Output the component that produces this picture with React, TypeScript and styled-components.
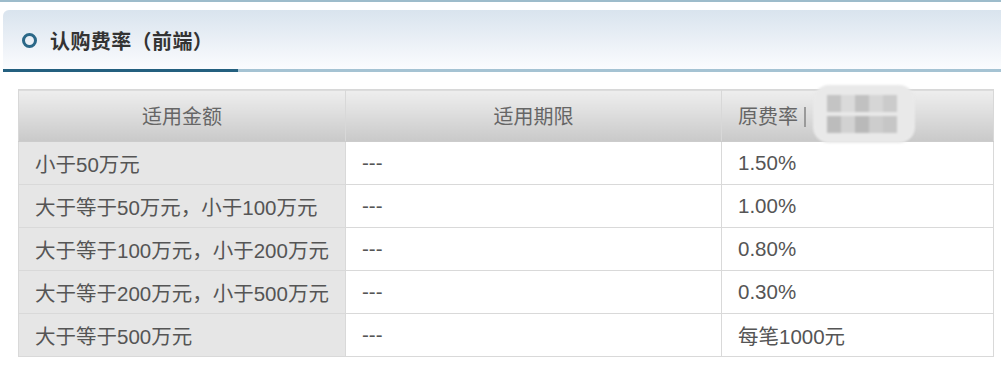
import React from 'react';
import styled, { createGlobalStyle } from 'styled-components';

const GlobalStyle = createGlobalStyle`
  html, body {
    margin: 0;
    padding: 0;
    background: #ffffff;
  }
  body {
    font-family: 'Liberation Sans', 'Noto Sans CJK SC', sans-serif;
  }
`;

type FeeRow = {
  amount: string;
  period: string;
  rate: string;
};

const rows: FeeRow[] = [
  { amount: '小于50万元', period: '---', rate: '1.50%' },
  { amount: '大于等于50万元，小于100万元', period: '---', rate: '1.00%' },
  { amount: '大于等于100万元，小于200万元', period: '---', rate: '0.80%' },
  { amount: '大于等于200万元，小于500万元', period: '---', rate: '0.30%' },
  { amount: '大于等于500万元', period: '---', rate: '每笔1000元' },
];

const Page = styled.div`
  border-top: 2px solid #9dbccb;
  width: 1001px;
  height: 363px;
  overflow: hidden;
`;

const Section = styled.div`
  margin: 8px 0 0 3px;
`;

const TitleBar = styled.div`
  height: 59px;
  display: flex;
  align-items: center;
  gap: 13px;
  padding: 1px 0 0 19px;
  box-sizing: border-box;
  border-top-left-radius: 6px;
  background: linear-gradient(to bottom, #d9e4ee 0%, #e8eef5 45%, #fbfcfe 100%);
`;

const Ring = styled.span`
  width: 9px;
  height: 9px;
  border: 3px solid #2b6888;
  border-radius: 50%;
  flex: none;
`;

const Title = styled.h2`
  margin: 0;
  font-family: 'Noto Sans CJK SC', sans-serif;
  font-size: 20px;
  font-weight: 700;
  color: #333333;
  letter-spacing: 0.4px;
`;

const TitleRule = styled.div`
  height: 3px;
  background: linear-gradient(to right, #24607f 235px, #a5c3d3 235px);
`;

const Table = styled.table`
  margin: 17px 0 0 18px;
  width: 975px;
  border-collapse: collapse;
  table-layout: fixed;
  font-size: 20.5px;
  color: #555555;
`;

const HeadCell = styled.th<{ $align?: 'left' | 'center' }>`
  position: relative;
  height: 52px;
  padding: 0 16px;
  box-sizing: border-box;
  font-size: 20px;
  font-weight: 400;
  color: #666666;
  text-align: ${(p) => p.$align ?? 'center'};
  background: linear-gradient(to bottom, #eeeeee 0%, #dcdcdc 50%, #c9c9c9 100%);
  border: 1px solid #d8d8d8;
  border-bottom-color: #cccccc;
`;

const Bar = styled.span`
  display: inline-block;
  width: 2px;
  height: 20px;
  margin-left: 6px;
  vertical-align: -3px;
  background: #9a9a9a;
`;

const Mosaic = styled.div`
  position: absolute;
  left: 91px;
  top: -5px;
  width: 102px;
  height: 58px;
  border-radius: 16px;
  background: #e9e9e9;
  filter: blur(1px);
  display: grid;
  grid-template-columns: repeat(5, 14px);
  grid-template-rows: 17px 17px;
  row-gap: 4px;
  padding: 10px 0 0 14px;
  box-sizing: border-box;
`;

const Pixel = styled.span<{ $shade: string }>`
  background: ${(p) => p.$shade};
`;

const Cell = styled.td<{ $shaded?: boolean }>`
  height: 43px;
  padding: 0 16px;
  box-sizing: border-box;
  border: 1px solid #d9d9d9;
  background: ${(p) => (p.$shaded ? '#e6e6e6' : '#ffffff')};
  white-space: nowrap;
`;

const shades = [
  '#c4c4c4', '#dadada', '#c1c1c1', '#d6d6d6', '#cbcbcb',
  '#bcbcbc', '#d2d2d2', '#b9b9b9', '#cdcdcd', '#c6c6c6',
];

export default function App() {
  return (
    <Page>
      <GlobalStyle />
      <Section>
        <TitleBar>
          <Ring />
          <Title>认购费率（前端）</Title>
        </TitleBar>
        <TitleRule />
      </Section>
      <Table>
        <colgroup>
          <col style={{ width: 327 }} />
          <col style={{ width: 376 }} />
          <col style={{ width: 272 }} />
        </colgroup>
        <thead>
          <tr>
            <HeadCell>适用金额</HeadCell>
            <HeadCell>适用期限</HeadCell>
            <HeadCell $align="left">
              原费率
              <Bar />
              <Mosaic>
                {shades.map((s, i) => (
                  <Pixel key={i} $shade={s} />
                ))}
              </Mosaic>
            </HeadCell>
          </tr>
        </thead>
        <tbody>
          {rows.map((r) => (
            <tr key={r.amount}>
              <Cell $shaded>{r.amount}</Cell>
              <Cell>{r.period}</Cell>
              <Cell>{r.rate}</Cell>
            </tr>
          ))}
        </tbody>
      </Table>
    </Page>
  );
}
